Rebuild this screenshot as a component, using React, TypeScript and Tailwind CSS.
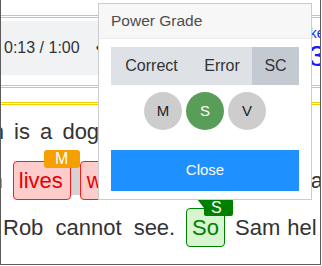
import React from "react";

function YellowRule() {
  return <div className="border-t-[3px] border-double border-[#f2cf00]" />;
}

export default function App() {
  return (
    <div className="relative w-[321px] h-[265px] overflow-hidden bg-white border-l border-r border-b border-[#5c5c5c] font-['Liberation_Sans',Arial,sans-serif]">
      {/* background page */}
      <div className="h-[15px]" />
      <YellowRule />
      <div className="h-[3px]" />
      <div className="flex h-[54px]">
        <div className="w-[260px] shrink-0 bg-[#f1f2f4] flex items-center pl-[3px] text-[16px] text-[#333] whitespace-nowrap">
          0:13 / 1:00<span className="ml-[16px]">•</span>
        </div>
        <div className="ml-[34px] pt-[4px] flex flex-col items-center text-[#1a1aff] shrink-0 whitespace-nowrap">
          <span className="text-[14px] leading-[16px]">Tokens</span>
          <span className="text-[30px] leading-[30px]">3</span>
        </div>
      </div>
      <div className="h-[10px]" />
      <YellowRule />
      <div className="h-[14px]" />
      <YellowRule />

      <div className="text-[22px] leading-[24px] text-[#333] whitespace-nowrap">
        {/* row 1 */}
        <div className="mt-[7px] h-[39px] flex items-center">
          <span className="ml-[-9.3px] [word-spacing:4px]">n is a dog</span>
        </div>
        {/* row 2 */}
        <div className="mt-[10px] h-[39px] flex items-stretch">
          <span className="ml-[-10.5px] flex items-center">n</span>
          <span className="relative ml-[10px] w-[58px] shrink-0 flex items-center pl-[5px] border border-[#ff1a1a] bg-[#ffcccc] rounded-[4px] text-[#e60000]">
            lives
            <span className="absolute left-[30px] top-[-12px] w-[36px] h-[18px] bg-[#f5a000] rounded-[3px] text-white text-[16px] leading-[18px] text-center z-10">
              M
            </span>
          </span>
          <span className="w-[9px] shrink-0 mt-[-1px] h-[35px] bg-[#d3d3d3]" />
          <span className="w-[53px] shrink-0 flex items-center pl-[6px] border border-[#ff1a1a] bg-[#ffcccc] rounded-[4px] text-[#e60000]">
            w
          </span>
          <span className="ml-[14px] w-[51px] shrink-0 flex items-center pl-[6px] border border-[#ff1a1a] bg-[#ffcccc] rounded-[4px] text-[#e60000]">
            ith
          </span>
          <span className="ml-[113px] flex items-center">a</span>
        </div>
        {/* row 3 */}
        <div className="mt-[8px] h-[39px] flex items-stretch">
          <span className="ml-[2px] w-[183px] shrink-0 flex items-center [word-spacing:6px]">Rob cannot see.</span>
          <span className="relative w-[39px] shrink-0 flex items-center pl-[5px] border border-[#008000] bg-[#d7f5cf] rounded-[4px] text-[#008000]">
            So
            <span className="absolute left-[10px] top-[-10px] w-[36px] h-[17px] z-10">
              <svg width="36" height="17" viewBox="0 0 36 17" className="absolute inset-0">
                <path d="M0,0 H34 Q36,0 36,2 V15 Q36,17 34,17 H9 Q7,17 7,15 V9 Z" fill="#008000" />
              </svg>
              <span className="absolute left-[14px] top-0 text-white text-[16px] leading-[17px]">S</span>
            </span>
          </span>
          <span className="ml-[10px] flex items-center [word-spacing:1px]">Sam hel</span>
        </div>
      </div>

      {/* Power Grade popover */}
      <div className="absolute left-[97px] top-[3px] w-[214px] h-[197px] bg-white border border-black/20 z-20 flex flex-col">
        <div className="h-[35px] bg-[#f7f7f7] border-b border-[#ebebeb] px-[12px] text-[15.5px] leading-[34px] text-[#4d4d4d]">
          Power Grade
        </div>
        <div className="px-[12px] pt-[8px]">
          <div className="flex h-[38px] bg-[#dee2e6] text-[16px] text-[#333]">
            <div className="w-[81px] flex items-center justify-center">Correct</div>
            <div className="w-[60px] flex items-center justify-center">Error</div>
            <div className="w-[47px] flex items-center justify-center bg-[#c3cad1]">SC</div>
          </div>
          <div className="mt-[7px] flex justify-center gap-[4px] text-[15px]">
            <div className="w-[38px] h-[38px] rounded-full bg-[#cdcdcd] flex items-center justify-center text-[#222]">M</div>
            <div className="w-[38px] h-[38px] rounded-full bg-[#589e58] flex items-center justify-center text-white">S</div>
            <div className="w-[38px] h-[38px] rounded-full bg-[#cdcdcd] flex items-center justify-center text-[#222]">V</div>
          </div>
          <button className="mt-[20px] w-full h-[41px] bg-[#1e90ff] text-white text-[15px] flex items-center justify-center">
            Close
          </button>
        </div>
      </div>
    </div>
  );
}
